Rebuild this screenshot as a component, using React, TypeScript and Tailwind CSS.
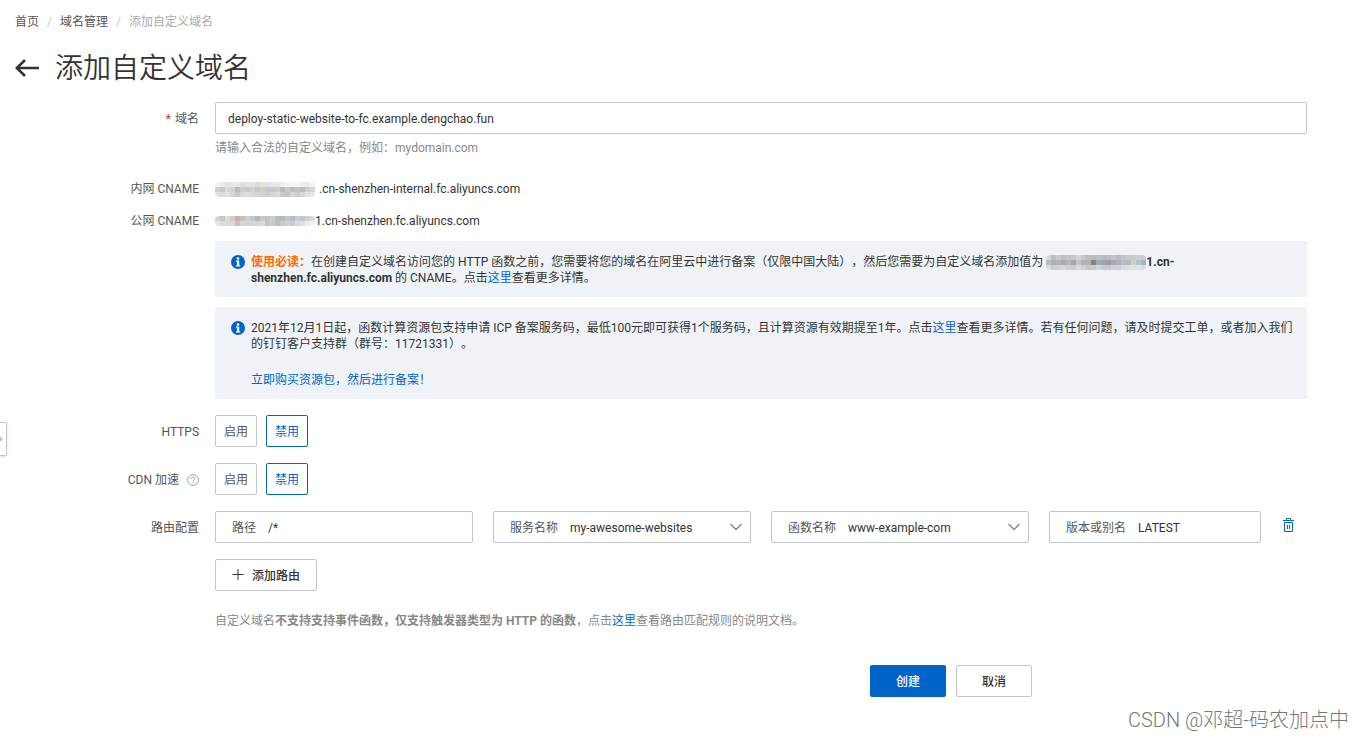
import { useState } from 'react';
import type { ReactNode } from 'react';

const FONT = 'font-[Roboto,"Noto_Sans_CJK_SC",sans-serif]';

function Mosaic({ rows, className }: { rows: string[][]; className?: string }) {
  const width = Math.max(...rows.map((row) => row.length)) * 5;
  const height = rows.length * 5;
  return (
    <svg
      width={width}
      height={height}
      viewBox={`0 0 ${width} ${height}`}
      shapeRendering="crispEdges"
      className={`inline-block shrink-0 rounded-sm ${className ?? ''}`}
      aria-hidden="true"
    >
      {rows.map((row, y) =>
        row.map((fill, x) => (
          <rect key={`${x}-${y}`} x={x * 5} y={y * 5} width="5" height="5" fill={fill} />
        ))
      )}
    </svg>
  );
}

const shades = (text: string) => text.split(' ').map((c) => `#${c}`);

const internalMask = [
  shades('f4f4f2 ececea e4e4e2 e6e6e4 e9e8e6 e0dfdd e6e4e2 e4e4e4 dcdcdc e2e2e2 dfe3e6 e4e8ea e8e6e2 eef0f0 f4f4f4 f6f6f6 f4f4f4 eeeeec ececec f4f4f4'),
  shades('d0d0ce c8cac8 dadad8 d4d2d0 c2b8b8 cfcbcb c8c8c6 d2d0cc c8c8c6 dccab8 b6cdd8 c4cacc d0ccc4 b2bcc2 c8c8c8 b8bec2 c4c4c4 bcbcbe cccccc d6d6d2'),
  shades('e0e0de dadcda e6e4e2 d8d8d8 d0c6c6 dcd8d6 e0e0e0 d8d8d6 d4d4d2 d2d2d2 cccccc d4d4d4 dcdcda c4cace c0c4c6 d6d6d6 cacccc d6d8d8 e2e2e2 e8e6dc'),
];

const publicMask = [
  shades('d2d2d0 c6c6c4 dcdcdc cecbc8 beb4b0 c8c2be d0d0d0 c0c6ca b4b8bc c8c8c8 c4c2c2 ccccca b8bcbe b4bcbe c2c6c6 b6bec2 c6ccd0 c0c4c8 d0d0d4 d8d8de'),
  shades('e2e2e0 dcdcdc d8d8d6 dcd8d6 d0bebe dcd4d0 d4d4d4 d6d6da d6d6d2 dadada c4c4c4 cacac8 bcbebe c8caca d0d2d2 c8ced0 d8dcde e0e0e0 eeeeee f4f4f4'),
];

const noticeMask = [
  shades('d4d8da bcc0c2 cacccc bec2c6 c2c6ca ccc8c6 d2d4d8 bccad2 c8bcb4 b4bcc2 bcc0c4 b8bcc2 b4bcc4 c8c4c6 b8bcc8 c4c4ca c0ccd4 d0c8bc c8d0d8 c8ccd0'),
  shades('b8bcbe acb0b2 b2b6ba a8acb0 b4b6ba b0a4a0 c4c8cc a8b4bc b8b0ac 7c868e a4a8ac a0a4aa 989ea4 a8a8aa b0b0b8 b8bcc4 b0bcc6 d2ccc2 b4c4d4 b0b4ba'),
  shades('d8dce0 c8ccd0 d0d4d8 d4d8dc ccd0d4 d0ccca d8dce0 ccd4da c4c8cc c8ccd0 d0d4d8 c8ccd0 c4c8cc d0d4d8 ccd0d8 d8dce2 dce0e6 e0e0e2 dce4ec d8dce0'),
];

function InfoIcon() {
  return (
    <svg width="14" height="14" viewBox="0 0 14 14" className="mt-px shrink-0" aria-hidden="true">
      <circle cx="7" cy="7" r="7" fill="#0064c8" />
      <circle cx="7" cy="3.5" r="1.3" fill="#fff" />
      <path d="M5 5.6h3.2v4.6h1v1.2H5v-1.2h1V6.8H5z" fill="#fff" />
    </svg>
  );
}

function Row({ label, children }: { label?: ReactNode; children: ReactNode }) {
  return (
    <div className="flex">
      <div className="flex h-8 w-[199px] shrink-0 items-center justify-end pt-0.5 text-[#555]">{label}</div>
      <div className="ml-4 min-w-0 flex-1">{children}</div>
    </div>
  );
}

function Notice({ children }: { children: ReactNode }) {
  return (
    <div className="flex gap-1.5 rounded-xs bg-[#eff3f8] pt-[13px] pr-3 pb-[11px] pl-4 leading-4 text-[#333]">
      <InfoIcon />
      <div className="min-w-0 flex-1">{children}</div>
    </div>
  );
}

function Link({ children }: { children: ReactNode }) {
  return (
    <a href="#" className="text-[#0064c8] hover:underline">
      {children}
    </a>
  );
}

function Toggle({ name }: { name: string }) {
  const [value, setValue] = useState('禁用');
  return (
    <div className="flex gap-[9px]" role="radiogroup" aria-label={name}>
      {['启用', '禁用'].map((option) => (
        <label
          key={option}
          className="relative flex h-8 w-[42px] cursor-pointer items-center justify-center rounded-xs border border-[#c0c6cc] pt-0.5 text-[#555] has-checked:border-[#0064c8] has-checked:text-[#0064c8]"
        >
          <input
            type="radio"
            name={name}
            className="sr-only"
            checked={value === option}
            onChange={() => setValue(option)}
          />
          {option}
        </label>
      ))}
    </div>
  );
}

function TextField({ label, value }: { label: string; value: string }) {
  return (
    <label className="flex h-8 min-w-0 items-center gap-3 rounded-xs border border-[#c0c6cc] px-4 pt-0.5">
      <span className="shrink-0 text-[#555]">{label}</span>
      <input type="text" defaultValue={value} className="min-w-0 flex-1 text-[#333] outline-none" />
    </label>
  );
}

function SelectField({ label, value }: { label: string; value: string }) {
  return (
    <label className="flex h-8 min-w-0 items-center gap-3 rounded-xs border border-[#c0c6cc] pt-0.5 pr-2 pl-4">
      <span className="shrink-0 text-[#555]">{label}</span>
      <select defaultValue={value} className="min-w-0 flex-1 appearance-none text-[#333] outline-none">
        <option>{value}</option>
      </select>
      <svg width="12" height="8" viewBox="0 0 12 8" fill="none" stroke="#888" strokeWidth="1.3" className="mb-0.5" aria-hidden="true">
        <path d="M.5 1 6 6.5 11.5 1" />
      </svg>
    </label>
  );
}

export default function App() {
  return (
    <div className={`relative min-h-screen bg-white text-xs text-[#333] [text-spacing-trim:space-all] ${FONT}`}>
      {/* Breadcrumb */}
      <nav className="flex h-11 items-center gap-2 px-[15px] text-[#555]">
        <a href="#">首页</a>
        <span className="text-[#ccc]">/</span>
        <a href="#">域名管理</a>
        <span className="text-[#ccc]">/</span>
        <span className="text-[#aaa]">添加自定义域名</span>
      </nav>

      {/* Title */}
      <header className="flex h-[50px] items-center gap-4 px-[15px]">
        <button type="button" aria-label="返回">
          <svg width="24" height="20" viewBox="0 0 24 20" fill="none" stroke="#333" strokeWidth="2.6" aria-hidden="true">
            <path d="M10 1 1.8 9 10 17M2 9h22" />
          </svg>
        </button>
        <h1 className="text-[28px] leading-10 font-[350]">添加自定义域名</h1>
      </header>

      <form className="pt-2 pr-[55px]" onSubmit={(e) => e.preventDefault()}>
        <Row
          label={
            <label htmlFor="domain">
              <span className="mr-1 text-[#d93026]">*</span>域名
            </label>
          }
        >
          <input
            id="domain"
            type="text"
            defaultValue="deploy-static-website-to-fc.example.dengchao.fun"
            className="block h-8 w-full rounded-xs border border-[#c0c6cc] px-3 pt-0.5 outline-none"
          />
          <p className="mt-1.5 leading-4 text-[#888]">请输入合法的自定义域名，例如：mydomain.com</p>
        </Row>

        <div className="mt-4">
          <Row label="内网 CNAME">
            <div className="flex h-8 items-center pt-0.5">
              <Mosaic rows={internalMask} className="mr-1" />
              .cn-shenzhen-internal.fc.aliyuncs.com
            </div>
          </Row>
          <Row label="公网 CNAME">
            <div className="flex h-8 items-center pt-0.5">
              <Mosaic rows={publicMask} />
              1.cn-shenzhen.fc.aliyuncs.com
            </div>
          </Row>
        </div>

        <div className="mt-[5px] ml-[215px] flex flex-col gap-2.5">
          <Notice>
            <p>
              <strong className="text-[#ff6a00]">使用必读：</strong>
              在创建自定义域名访问您的 HTTP 函数之前，您需要将您的域名在阿里云中进行备案（仅限中国大陆），然后您需要为自定义域名添加值为{' '}
              <strong>
                <Mosaic rows={noticeMask} className="align-middle" />
                1.cn-shenzhen.fc.aliyuncs.com
              </strong>{' '}
              的 CNAME。点击<Link>这里</Link>查看更多详情。
            </p>
          </Notice>
          <Notice>
            <p>
              2021年12月1日起，函数计算资源包支持申请 ICP 备案服务码，最低100元即可获得1个服务码，且计算资源有效期提至1年。点击
              <Link>这里</Link>查看更多详情。若有任何问题，请及时提交工单，或者加入我们的钉钉客户支持群（群号：11721331）。
            </p>
            <p className="mt-5">
              <Link>立即购买资源包，然后进行备案！</Link>
            </p>
          </Notice>
        </div>

        <div className="mt-4 flex flex-col gap-4">
          <Row label="HTTPS">
            <Toggle name="HTTPS" />
          </Row>
          <Row
            label={
              <>
                CDN 加速
                <svg width="12" height="12" viewBox="0 0 12 12" fill="none" stroke="#999" className="ml-2" aria-hidden="true">
                  <circle cx="6" cy="6" r="5.4" strokeWidth=".9" />
                  <path d="M4.3 4.8a1.7 1.7 0 1 1 2.5 1.5c-.6.3-.8.6-.8 1.2M6 8.3v1" strokeWidth=".9" />
                </svg>
              </>
            }
          >
            <Toggle name="CDN 加速" />
          </Row>
          <Row label="路由配置">
            <div className="grid grid-cols-[258fr_258fr_258fr_212fr_26px] items-center gap-5">
              <TextField label="路径" value="/*" />
              <SelectField label="服务名称" value="my-awesome-websites" />
              <SelectField label="函数名称" value="www-example-com" />
              <TextField label="版本或别名" value="LATEST" />
              <button type="button" aria-label="删除" className="pb-1">
                <svg width="15" height="15" viewBox="0 0 15 15" fill="none" stroke="#0064c8" aria-hidden="true">
                  <path d="M2 2.5h11M5.5 2.5v-2h4v2M3.5 4.5h8v9h-8zM6.5 7v4M8.5 7v4" />
                </svg>
              </button>
            </div>
            <button
              type="button"
              className="mt-4 flex h-8 items-center gap-2 rounded-xs border border-[#c0c6cc] px-4 pt-0.5 font-medium"
            >
              <svg width="12" height="12" viewBox="0 0 12 12" stroke="#333" className="mb-0.5" aria-hidden="true">
                <path d="M.5 5.5h11M6 0v11" />
              </svg>
              添加路由
            </button>
            <p className="mt-[22px] leading-4 text-[#888]">
              自定义域名<strong>不支持支持事件函数，仅支持触发器类型为 HTTP 的函数</strong>，点击<Link>这里</Link>
              查看路由匹配规则的说明文档。
            </p>
          </Row>
        </div>

        <div className="mt-9 ml-[215px] flex justify-end gap-2.5 pr-[275px]">
          <button type="submit" className="h-8 w-[76px] rounded-xs bg-[#0064c8] pt-0.5 font-medium text-white">
            创建
          </button>
          <button type="button" className="h-8 w-[76px] rounded-xs border border-[#c0c6cc] pt-0.5 font-medium">
            取消
          </button>
        </div>
      </form>

      {/* Collapsed side panel handle */}
      <button
        type="button"
        aria-label="展开"
        className="absolute top-[422px] left-0 flex h-[34px] w-[7px] items-center rounded-r-xs border border-l-0 border-[#c0c6cc] bg-white shadow"
      >
        <svg width="3" height="6" viewBox="0 0 3 6" aria-hidden="true">
          <path d="M0 0 3 3 0 6z" fill="#c0c6cc" />
        </svg>
      </button>

      <div className="absolute right-[13px] bottom-1 text-xl font-light text-[#777]">CSDN @邓超-码农加点中</div>
    </div>
  );
}
